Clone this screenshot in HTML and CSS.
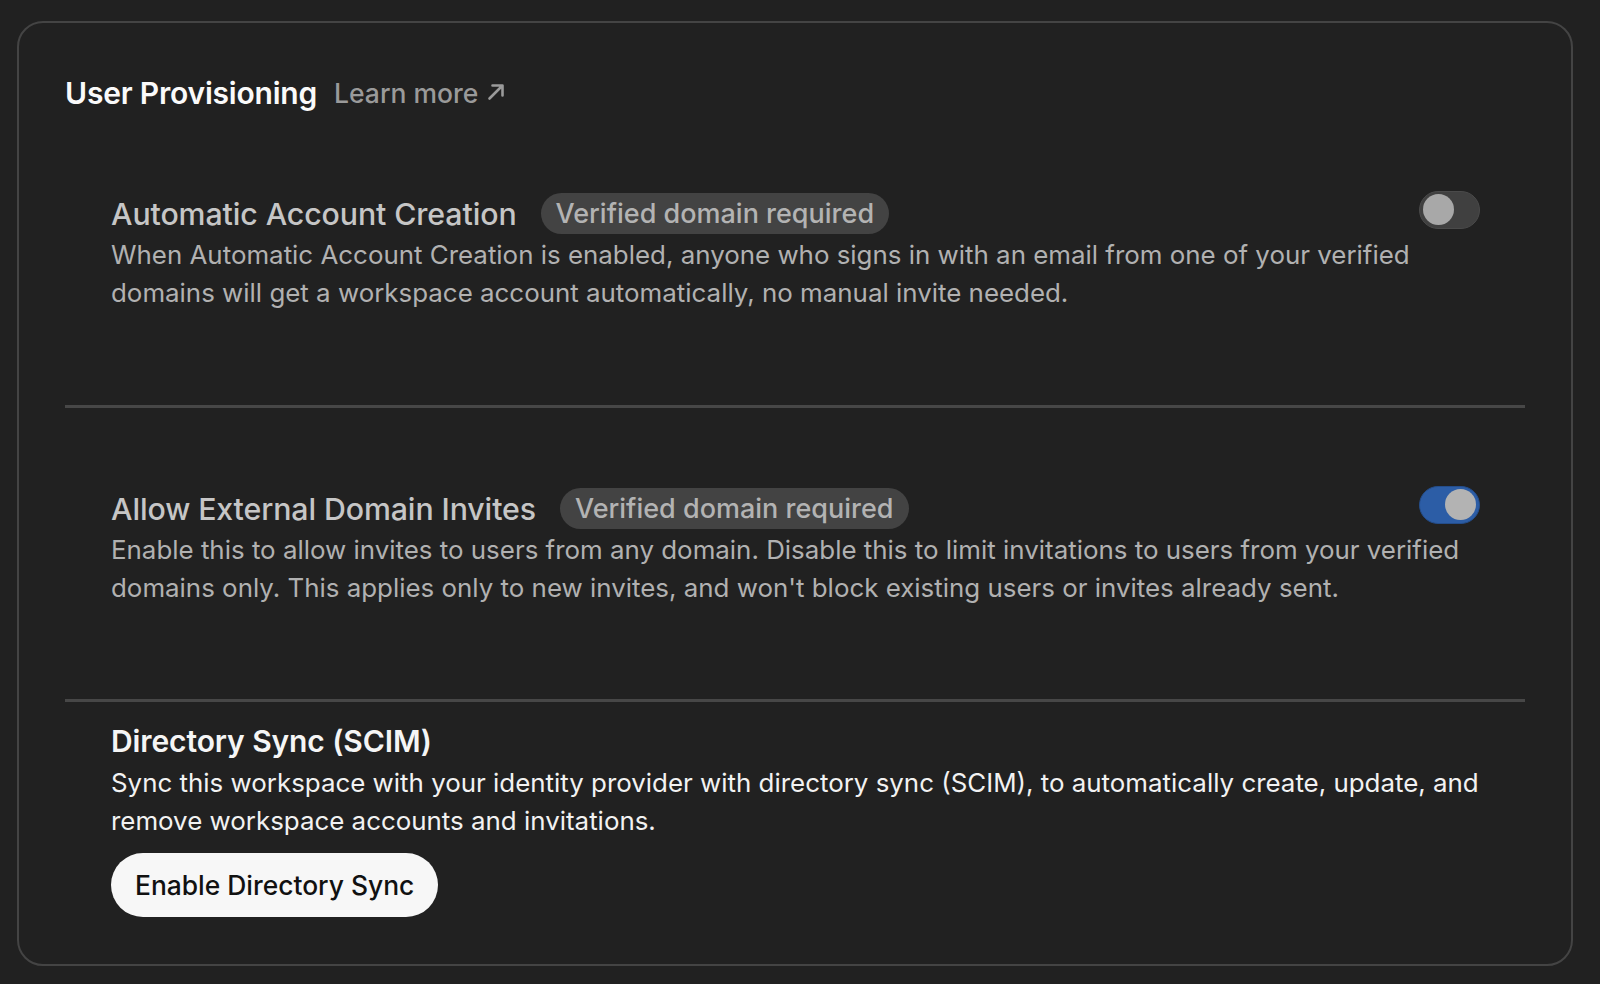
FILE: index.html
```html
<!DOCTYPE html>
<html>
<head>
    <title>User Provisioning</title>
    <link rel="stylesheet" href="styles.css">
</head>
<body>
    <div class="card">
        <div class="card-head">
            <h2 class="card-title">User Provisioning</h2>
            <a class="learn-more" href="#">Learn more
                <svg class="arrow" width="20" height="20" viewBox="0 0 20 20">
                    <path d="M3.5 16.5 L16 4 M6.5 3.5 H16.5 V13.5" fill="none" stroke="currentColor" stroke-width="2.6" stroke-linecap="round" stroke-linejoin="round"/>
                </svg>
            </a>
        </div>

        <div class="setting first">
            <div class="setting-head">
                <span class="setting-name">Automatic Account Creation</span>
                <span class="badge">Verified domain required</span>
                <div class="toggle"><div class="knob"></div></div>
            </div>
            <p class="setting-desc">When Automatic Account Creation is enabled, anyone who signs in with an email from one of your verified domains will get a workspace account automatically, no manual invite needed.</p>
        </div>

        <div class="divider"></div>

        <div class="setting second">
            <div class="setting-head">
                <span class="setting-name">Allow External Domain Invites</span>
                <span class="badge">Verified domain required</span>
                <div class="toggle on"><div class="knob"></div></div>
            </div>
            <p class="setting-desc">Enable this to allow invites to users from any domain. Disable this to limit invitations to users from your verified domains only. This applies only to new invites, and won't block existing users or invites already sent.</p>
        </div>

        <div class="divider"></div>

        <div class="sync">
            <div class="sync-title">Directory Sync (SCIM)</div>
            <p class="sync-desc">Sync this workspace with your identity provider with directory sync (SCIM), to automatically create, update, and remove workspace accounts and invitations.</p>
            <button class="button">Enable Directory Sync</button>
        </div>
    </div>
</body>
</html>
```

FILE: styles.css
```css
body {
    margin: 0;
    background: #212121;
    font-family: Inter, "Noto Sans", sans-serif;
    -webkit-font-smoothing: antialiased;
}

.card {
    margin: 21px 27px 18px 17px;
    border: 2px solid #444;
    border-radius: 26px;
    padding: 50px 46px 48px 46px;
    height: 945px;
    box-sizing: border-box;
}

.card-head {
    display: flex;
    align-items: center;
    gap: 17px;
    height: 40px;
}

.card-title {
    margin: 0;
    font-size: 30px;
    font-weight: 600;
    color: #fafafa;
    letter-spacing: -0.2px;
}

.learn-more {
    display: flex;
    align-items: center;
    gap: 8px;
    color: #9a9a9a;
    font-size: 26.5px;
    font-weight: 500;
    text-decoration: none;
}

.arrow {
    margin-top: -3px;
}

.setting {
    padding: 0 45px 0 46px;
}

.setting.first {
    margin-top: 80px;
    margin-bottom: 93px;
}

.setting.second {
    margin-top: 80px;
    margin-bottom: 92px;
}

.setting-head {
    display: flex;
    align-items: center;
    gap: 24px;
    height: 41px;
}

.setting-name {
    font-size: 30.3px;
    font-weight: 500;
    color: #c6c6c6;
    letter-spacing: -0.1px;
}

.badge {
    background: #434343;
    color: #b3b3b3;
    font-size: 27px;
    font-weight: 500;
    line-height: 41px;
    padding: 0 15px;
    border-radius: 21px;
}

.setting-desc {
    margin: 2px 0 0;
    font-size: 25.9px;
    line-height: 38px;
    color: #b1b1b1;
    max-width: 1372px;
}

.toggle {
    width: 61px;
    height: 38px;
    margin-left: auto;
    margin-top: -8px;
    border-radius: 19px;
    background: #404040;
    border: 1px solid #4a4a4a;
    box-sizing: border-box;
    display: flex;
    align-items: center;
    padding: 0 3px;
}

.knob {
    width: 31px;
    height: 31px;
    border-radius: 50%;
    background: #a8a8a8;
}

.toggle.on {
    background: #2c5da6;
    border-color: #244d8a;
    justify-content: flex-end;
    margin-top: -8px;
}

.toggle.on .knob {
    background: #b3b3b3;
}

.divider {
    height: 3px;
    background: #474747;
}

.sync {
    padding: 22px 0 0 46px;
}

.sync-title {
    font-size: 30px;
    font-weight: 600;
    color: #f5f5f5;
    line-height: 34px;
    letter-spacing: -0.1px;
}

.sync-desc {
    margin: 6px 0 0;
    font-size: 25.9px;
    line-height: 38px;
    color: #f2f2f2;
    max-width: 1395px;
}

.button {
    margin-top: 13px;
    height: 64px;
    padding: 0 24px;
    border: none;
    border-radius: 32px;
    background: #f7f7f7;
    color: #111;
    font-family: inherit;
    font-size: 26.4px;
    font-weight: 500;
    cursor: pointer;
}
```
